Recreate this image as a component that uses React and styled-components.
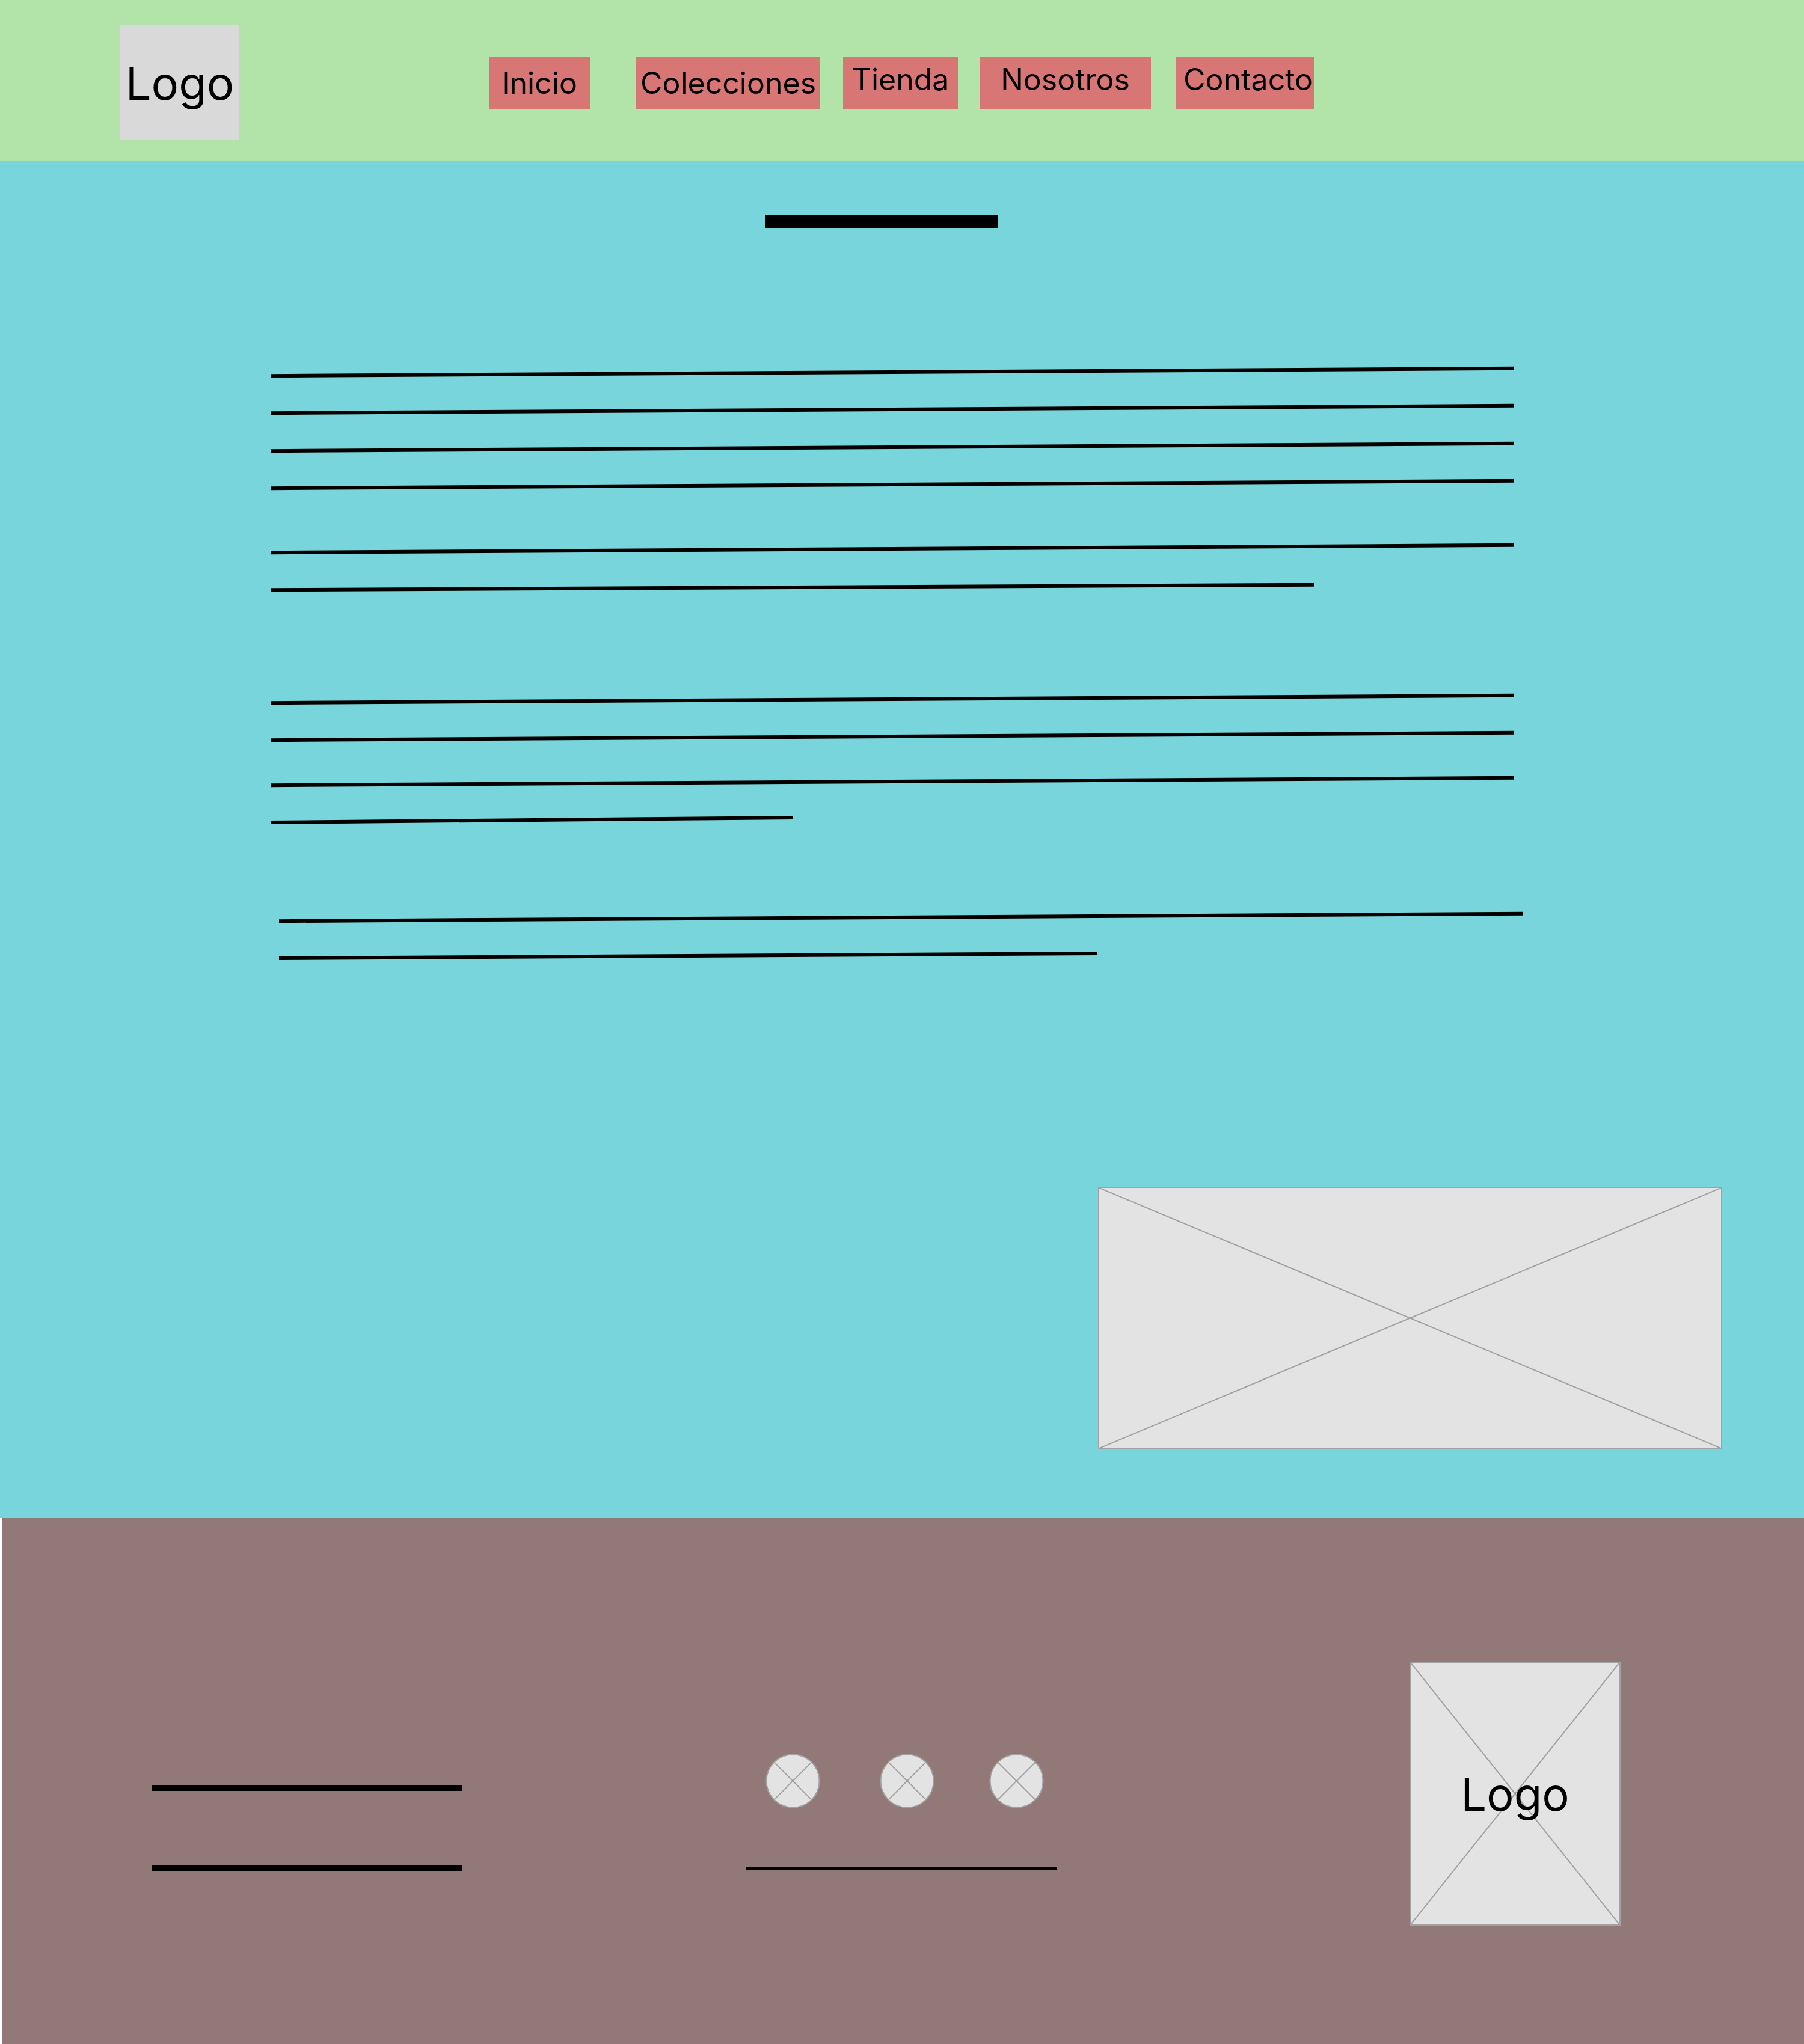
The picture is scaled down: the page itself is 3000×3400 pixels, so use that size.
import styled, { createGlobalStyle } from "styled-components";

const GlobalStyle = createGlobalStyle`
  html, body {
    margin: 0;
    padding: 0;
    background: #ffffff;
  }
  body {
    font-family: Inter, "Noto Sans", "Liberation Sans", sans-serif;
    color: #000000;
  }
`;

const Page = styled.div`
  width: 3000px;
  display: flex;
  flex-direction: column;
`;

/* ---------- header ---------- */

const Header = styled.header`
  height: 268px;
  background: #b2e3a8;
  display: flex;
  align-items: flex-start;
`;

const LogoBox = styled.div`
  flex-shrink: 0;
  width: 198px;
  height: 191px;
  margin: 42px 0 0 200px;
  background: #d9d9d9;
  display: flex;
  align-items: center;
  justify-content: center;
  font-size: 76px;
  line-height: 1;
`;

const Nav = styled.nav`
  display: flex;
  margin: 94px 0 0 415px;
`;

const NavButton = styled.a`
  flex-shrink: 0;
  width: ${(p) => p.$w}px;
  height: 87px;
  margin-left: ${(p) => p.$ml || 0}px;
  padding-bottom: ${(p) => (p.$lift ? 12 : 0)}px;
  padding-left: ${(p) => p.$shift || 0}px;
  box-sizing: border-box;
  background: #d87676;
  display: flex;
  align-items: center;
  justify-content: center;
  font-size: 50px;
  line-height: 1;
  white-space: nowrap;
  color: #000000;
  text-decoration: none;
`;

/* ---------- main ---------- */

const Main = styled.main`
  height: 2257px;
  box-sizing: border-box;
  padding-top: 89px;
  background: #78d5db;
  display: flex;
  flex-direction: column;
`;

const TitleBar = styled.div`
  width: 386px;
  height: 23px;
  margin-left: 1273px;
  background: #000000;
`;

const TextBlock = styled.div`
  display: flex;
  flex-direction: column;
  margin-left: ${(p) => p.$x}px;
`;

const TextLine = styled.div`
  width: ${(p) => p.$w}px;
  height: 6px;
  margin-top: ${(p) => p.$mt}px;
  background: #000000;
  transform: rotate(${(p) => -(p.$tilt || 0.34)}deg);
`;

const Placeholder = styled.div`
  width: 1038px;
  height: 437px;
  margin: 381px 0 0 1826px;
  box-sizing: border-box;
  border: 2px solid #a2a2a2;
  background: #e3e3e3;
  position: relative;
`;

const Cross = styled.svg`
  position: absolute;
  inset: 0;
  width: 100%;
  height: 100%;
  display: block;
`;

/* ---------- footer ---------- */

const Footer = styled.footer`
  height: 875px;
  margin-left: 4px;
  background: #937878;
  display: flex;
  align-items: flex-start;
`;

const FooterLinks = styled.div`
  flex-shrink: 0;
  width: 517px;
  margin: 444px 0 0 248px;
  display: flex;
  flex-direction: column;
  gap: 123px;
`;

const FooterRule = styled.div`
  height: 10px;
  background: #000000;
`;

const SocialColumn = styled.div`
  flex-shrink: 0;
  width: 517px;
  margin: 392px 0 0 472px;
  display: flex;
  flex-direction: column;
`;

const SocialRow = styled.div`
  display: flex;
  margin-left: 32px;
  gap: 99px;
  & > :last-child {
    margin-left: -8px;
  }
`;

const SocialIcon = styled.svg`
  flex-shrink: 0;
  width: 91px;
  height: 91px;
  display: block;
`;

const ThinRule = styled.div`
  height: 4px;
  margin-top: 98px;
  background: #000000;
`;

const FooterLogo = styled.div`
  flex-shrink: 0;
  width: 351px;
  height: 439px;
  margin: 239px 0 0 586px;
  box-sizing: border-box;
  border: 2px solid #a2a2a2;
  background: #e3e3e3;
  position: relative;
  display: flex;
  align-items: center;
  justify-content: center;
  font-size: 76px;
  line-height: 1;
`;

const LogoLabel = styled.span`
  position: relative;
`;

const navItems = [
  { label: "Inicio", w: 168, ml: 0 },
  { label: "Colecciones", w: 306, ml: 77 },
  { label: "Tienda", w: 191, ml: 38, lift: true },
  { label: "Nosotros", w: 285, ml: 36, lift: true },
  { label: "Contacto", w: 229, ml: 42, lift: true, shift: 10 },
];

const blocks = [
  {
    x: 450,
    lines: [
      { w: 2068, mt: 236 },
      { w: 2068, mt: 56 },
      { w: 2068, mt: 57 },
      { w: 2068, mt: 56 },
      { w: 2068, mt: 101 },
      { w: 1735, mt: 58, tilt: 0.28 },
      { w: 2068, mt: 180 },
      { w: 2068, mt: 56 },
      { w: 2068, mt: 69 },
      { w: 869, mt: 58, tilt: 0.53 },
    ],
  },
  {
    x: 464,
    lines: [
      { w: 2069, mt: 156 },
      { w: 1361, mt: 58 },
    ],
  },
];

const XMark = () => (
  <Cross viewBox="0 0 100 100" preserveAspectRatio="none">
    <line x1="0" y1="0" x2="100" y2="100" stroke="#a0a0a0" strokeWidth="2" vectorEffect="non-scaling-stroke" />
    <line x1="100" y1="0" x2="0" y2="100" stroke="#a0a0a0" strokeWidth="2" vectorEffect="non-scaling-stroke" />
  </Cross>
);

const Social = () => (
  <SocialIcon viewBox="0 0 91 91">
    <circle cx="45.5" cy="45.5" r="44" fill="#e3e3e3" stroke="#a0a0a0" strokeWidth="2" />
    <line x1="14.4" y1="14.4" x2="76.6" y2="76.6" stroke="#a0a0a0" strokeWidth="2" />
    <line x1="76.6" y1="14.4" x2="14.4" y2="76.6" stroke="#a0a0a0" strokeWidth="2" />
  </SocialIcon>
);

export default function App() {
  return (
    <>
      <GlobalStyle />
      <Page>
        <Header>
          <LogoBox>Logo</LogoBox>
          <Nav>
            {navItems.map((item) => (
              <NavButton
                key={item.label}
                href="#"
                $w={item.w}
                $ml={item.ml}
                $lift={item.lift}
                $shift={item.shift}
              >
                {item.label}
              </NavButton>
            ))}
          </Nav>
        </Header>

        <Main>
          <TitleBar />
          {blocks.map((block, i) => (
            <TextBlock key={i} $x={block.x}>
              {block.lines.map((line, j) => (
                <TextLine key={j} $w={line.w} $mt={line.mt} $tilt={line.tilt} />
              ))}
            </TextBlock>
          ))}
          <Placeholder>
            <XMark />
          </Placeholder>
        </Main>

        <Footer>
          <FooterLinks>
            <FooterRule />
            <FooterRule />
          </FooterLinks>
          <SocialColumn>
            <SocialRow>
              <Social />
              <Social />
              <Social />
            </SocialRow>
            <ThinRule />
          </SocialColumn>
          <FooterLogo>
            <XMark />
            <LogoLabel>Logo</LogoLabel>
          </FooterLogo>
        </Footer>
      </Page>
    </>
  );
}
